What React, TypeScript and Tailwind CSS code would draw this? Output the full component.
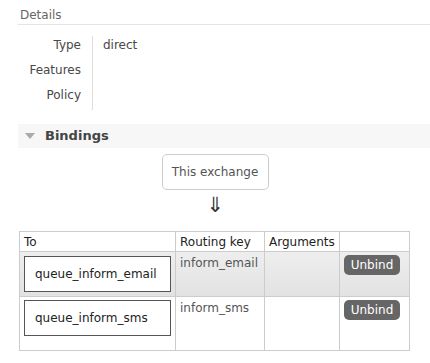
export default function App() {
	return (
		<div className="w-[430px] h-[363px] bg-white overflow-hidden text-[12px] text-[#484848]" style={{ fontFamily: '"DejaVu Sans", Verdana, sans-serif' }}>
			{/* details */}
			<div className="ml-[18px] pt-[6px] pl-[2px] h-[25px] border-b border-[#e4e4e4] text-[#666]">Details</div>
			<div className="flex ml-[18px] mt-[11px]">
				<div className="w-[74px] pr-[11px] text-right leading-[25px] -mt-[3px]">
					<p>Type</p>
					<p>Features</p>
					<p>Policy</p>
				</div>
				<div className="border-l border-[#ddd] h-[74px] pl-[10px] leading-[25px]">
					<p className="-mt-[3px]">direct</p>
				</div>
			</div>

			{/* bindings */}
			<div className="ml-[18px] mt-[14px] h-[24px] bg-[#f7f7f7] flex items-center pl-[7px] gap-[10px]">
				<svg width="10" height="6" viewBox="0 0 10 6"><path d="M0 0H10L5 6Z" fill="#aaa" /></svg>
				<span className="font-bold text-[13px] text-[#444]">Bindings</span>
			</div>
			<div className="flex flex-col items-center">
				<div className="mt-[6px] w-[107px] h-[36px] border border-[#ccc] rounded-[5px] flex items-center justify-center text-[#555]">This exchange</div>
				<div className="text-[21px] leading-[22px] mt-[4px] text-[#333]">⇓</div>
			</div>

			<table className="ml-[19px] mt-[15px] border-collapse text-left">
				<thead>
					<tr className="h-[20px]">
						<th className="font-normal w-[156px] border border-[#ccc] px-[4px] text-[#222]">To</th>
						<th className="font-normal w-[89px] border border-[#ccc] px-[4px] text-[#222]">Routing key</th>
						<th className="font-normal w-[75px] border border-[#ccc] px-[4px] text-[#222]">Arguments</th>
						<th className="w-[70px] border border-[#ccc]"></th>
					</tr>
				</thead>
				<tbody>
					<tr className="h-[45px] bg-gradient-to-b from-[#eee] to-[#e2e2e2]">
						<td className="border border-[#ccc] px-[4px] py-[3px]">
							<div className="h-[36px] border border-[#555] bg-white flex items-center pl-[10px] text-[#222]">queue_inform_email</div>
						</td>
						<td className="border border-[#ccc] px-[4px] align-top pt-[2px] text-[#555]">inform_email</td>
						<td className="border border-[#ccc]"></td>
						<td className="border border-[#ccc] align-top pt-[3px] pl-[4px]">
							<button className="w-[56px] h-[20px] rounded-[5px] bg-[#666] text-white text-[12px]">Unbind</button>
						</td>
					</tr>
					<tr className="h-[53px] bg-white">
						<td className="border border-[#ccc] px-[4px] pt-[3px] pb-[14px] align-top">
							<div className="h-[36px] border border-[#555] bg-white flex items-center pl-[10px] text-[#222]">queue_inform_sms</div>
						</td>
						<td className="border border-[#ccc] px-[4px] align-top pt-[2px] text-[#555]">inform_sms</td>
						<td className="border border-[#ccc]"></td>
						<td className="border border-[#ccc] align-top pt-[3px] pl-[4px]">
							<button className="w-[56px] h-[20px] rounded-[5px] bg-[#666] text-white text-[12px]">Unbind</button>
						</td>
					</tr>
				</tbody>
			</table>
		</div>
	)
}
